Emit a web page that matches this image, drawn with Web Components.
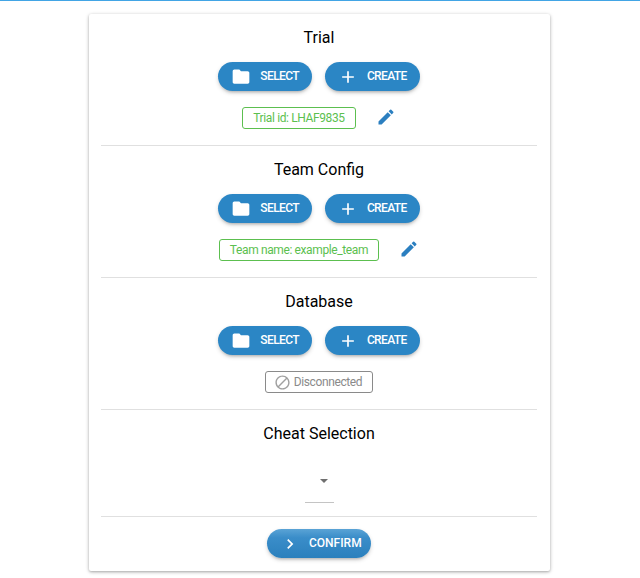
<!DOCTYPE html>
<html>
<head>
<meta charset="utf-8">
<title>Setup</title>
<style>
  html, body { margin: 0; padding: 0; background: #fff; height: 578px; overflow: hidden; }
  body { font-family: Roboto, "Liberation Sans", sans-serif; }
</style>
</head>
<body>
<setup-page>
  <setup-section heading="Trial">
    <action-button icon="folder" slot="actions">Select</action-button>
    <action-button icon="plus" slot="actions">Create</action-button>
    <status-chip>Trial id: LHAF9835</status-chip>
    <edit-button></edit-button>
  </setup-section>
  <setup-section heading="Team Config">
    <action-button icon="folder" slot="actions">Select</action-button>
    <action-button icon="plus" slot="actions">Create</action-button>
    <status-chip>Team name: example_team</status-chip>
    <edit-button></edit-button>
  </setup-section>
  <setup-section heading="Database">
    <action-button icon="folder" slot="actions">Select</action-button>
    <action-button icon="plus" slot="actions">Create</action-button>
    <status-chip state="off">Disconnected</status-chip>
  </setup-section>
  <cheat-select></cheat-select>
  <confirm-bar></confirm-bar>
</setup-page>

<script>
const ICONS = {
  folder: '<path d="M10 3H4c-1.1 0-2 .9-2 2v13c0 1.1.9 2 2 2h16c1.1 0 2-.9 2-2V7c0-1.1-.9-2-2-2h-8l-2-2z"/>',
  plus: '<path d="M19 13h-6v6h-2v-6H5v-2h6V5h2v6h6v2z"/>',
  chevron: '<path d="M8.59 16.59L13.17 12 8.59 7.41 10 6l6 6-6 6z"/>',
  pencil: '<path d="M3 17.25V21h3.75L17.81 9.94l-3.75-3.75L3 17.25zM20.71 7.04a1 1 0 0 0 0-1.41l-2.34-2.34a1 1 0 0 0-1.41 0l-1.83 1.83 3.75 3.75 1.83-1.83z"/>',
  block: '<path d="M12 2C6.48 2 2 6.48 2 12s4.48 10 10 10 10-4.48 10-10S17.52 2 12 2zM4 12c0-4.42 3.58-8 8-8 1.85 0 3.55.63 4.9 1.69L5.69 16.9A7.902 7.902 0 0 1 4 12zm8 8c-1.85 0-3.55-.63-4.9-1.69L18.31 7.1A7.902 7.902 0 0 1 20 12c0 4.42-3.58 8-8 8z"/>'
};

class SetupPage extends HTMLElement {
  constructor() {
    super();
    this.attachShadow({ mode: "open" });
  }
  connectedCallback() {
    this.shadowRoot.innerHTML = `
      <style>
      :host {
        display: block;
        height: 578px;
        box-sizing: border-box;
        border-top: 1px solid #42a5e5;
        padding-top: 13px;
      }
      .card {
        width: 461px;
        height: 557px;
        margin-left: 89px;
        box-sizing: border-box;
        padding: 0 13px 0 12px;
        background: #fff;
        border-radius: 2px;
        box-shadow: 0 1px 3px rgba(0,0,0,.3), 0 1px 5px rgba(0,0,0,.1);
        display: flex;
        flex-direction: column;
      }
      </style>
      <div class="card"><slot></slot></div>
    `;
  }
}
customElements.define("setup-page", SetupPage);

class SetupSection extends HTMLElement {
  constructor() {
    super();
    this.attachShadow({ mode: "open" });
  }
  connectedCallback() {
    this.shadowRoot.innerHTML = `
      <style>
      :host {
        display: block;
        height: 132px;
        box-sizing: border-box;
        border-bottom: 1px solid #e0e0e0;
        padding-top: 14px;
      }
      h2 {
        margin: 0;
        font: 400 16px/20px Roboto, "Liberation Sans", sans-serif;
        color: #000;
        text-align: center;
      }
      .actions {
        display: flex;
        justify-content: center;
        gap: 13px;
        margin-top: 14px;
      }
      .status {
        display: flex;
        justify-content: center;
        align-items: center;
        gap: 20px;
        margin-top: 16px;
      }
      </style>
      <h2>${this.getAttribute("heading")}</h2>
      <div class="actions"><slot name="actions"></slot></div>
      <div class="status"><slot></slot></div>
    `;
  }
}
customElements.define("setup-section", SetupSection);

class ActionButton extends HTMLElement {
  constructor() {
    super();
    this.attachShadow({ mode: "open" });
  }
  connectedCallback() {
    this.shadowRoot.innerHTML = `
      <style>
      :host {
        display: inline-flex;
        align-items: center;
        height: 29px;
        padding: 0 13px;
        border-radius: 15px;
        background: #2b86c5;
        color: #fff;
        font: 500 12px/27px Roboto, "Liberation Sans", sans-serif;
        letter-spacing: -.62px;
        text-transform: uppercase;
        box-shadow: 0 3px 3px -2px rgba(0,0,0,.2), 0 2px 4px rgba(0,0,0,.16);
      }
      svg { width: 20px; height: 20px; fill: #fff; margin-right: 9px; }
      </style>
      <svg viewBox="0 0 24 24">${ICONS[this.getAttribute("icon")]}</svg><slot></slot>
    `;
  }
}
customElements.define("action-button", ActionButton);

class StatusChip extends HTMLElement {
  constructor() {
    super();
    this.attachShadow({ mode: "open" });
  }
  connectedCallback() {
    const off = this.getAttribute("state") === "off";
    this.shadowRoot.innerHTML = `
      <style>
      :host {
        display: inline-flex;
        align-items: center;
        height: 22px;
        box-sizing: border-box;
        padding: 0 10px;
        border: 1px solid ${off ? "#8a8a8a" : "#5cbf4f"};
        border-radius: 3px;
        color: ${off ? "#8a8a8a" : "#5cbf4f"};
        font: 400 12px/18px Roboto, "Liberation Sans", sans-serif;
        letter-spacing: -.38px;
      }
      svg { width: 17px; height: 17px; fill: #a0a0a0; margin: 0 3px 0 -2px; }
      </style>
      ${off ? `<svg viewBox="0 0 24 24">${ICONS.block}</svg>` : ""}<slot></slot>
    `;
  }
}
customElements.define("status-chip", StatusChip);

class EditButton extends HTMLElement {
  constructor() {
    super();
    this.attachShadow({ mode: "open" });
  }
  connectedCallback() {
    this.shadowRoot.innerHTML = `
      <style>
      :host { display: inline-flex; width: 20px; height: 20px; margin-bottom: 2px; }
      svg { width: 20px; height: 20px; fill: #2b7fc0; }
      </style>
      <svg viewBox="0 0 24 24">${ICONS.pencil}</svg>
    `;
  }
}
customElements.define("edit-button", EditButton);

class CheatSelect extends HTMLElement {
  constructor() {
    super();
    this.attachShadow({ mode: "open" });
  }
  connectedCallback() {
    this.shadowRoot.innerHTML = `
      <style>
      :host {
        display: block;
        height: 107px;
        box-sizing: border-box;
        border-bottom: 1px solid #e0e0e0;
        padding-top: 14px;
      }
      h2 {
        margin: 0;
        font: 400 16px/20px Roboto, "Liberation Sans", sans-serif;
        color: #000;
        text-align: center;
      }
      .select {
        width: 29px;
        height: 59px;
        margin: 0 auto;
        box-sizing: border-box;
        border-bottom: 1px solid #c4c4c4;
        display: flex;
        justify-content: flex-end;
        padding-top: 35px;
      }
      .arrow {
        width: 0;
        height: 0;
        margin-right: 6px;
        border-left: 4.5px solid transparent;
        border-right: 4.5px solid transparent;
        border-top: 4.5px solid #6f6f6f;
      }
      </style>
      <h2>Cheat Selection</h2>
      <div class="select"><div class="arrow"></div></div>
    `;
  }
}
customElements.define("cheat-select", CheatSelect);

class ConfirmBar extends HTMLElement {
  constructor() {
    super();
    this.attachShadow({ mode: "open" });
  }
  connectedCallback() {
    this.shadowRoot.innerHTML = `
      <style>
      :host {
        display: flex;
        justify-content: center;
        padding-top: 12px;
      }
      .btn {
        display: inline-flex;
        align-items: center;
        width: 104px;
        height: 29px;
        box-sizing: border-box;
        padding-left: 13px;
        border-radius: 15px;
        background: linear-gradient(#5aa3d6 0, #3a8dc9 30%, #2b80bd 100%);
        color: #fff;
        font: 500 12px/27px Roboto, "Liberation Sans", sans-serif;
        box-shadow: 0 3px 3px -2px rgba(0,0,0,.2), 0 2px 4px rgba(0,0,0,.16);
      }
      svg { width: 20px; height: 20px; fill: #fff; margin-right: 9px; }
      </style>
      <div class="btn"><svg viewBox="0 0 24 24">${ICONS.chevron}</svg>CONFIRM</div>
    `;
  }
}
customElements.define("confirm-bar", ConfirmBar);
</script>
</body>
</html>
